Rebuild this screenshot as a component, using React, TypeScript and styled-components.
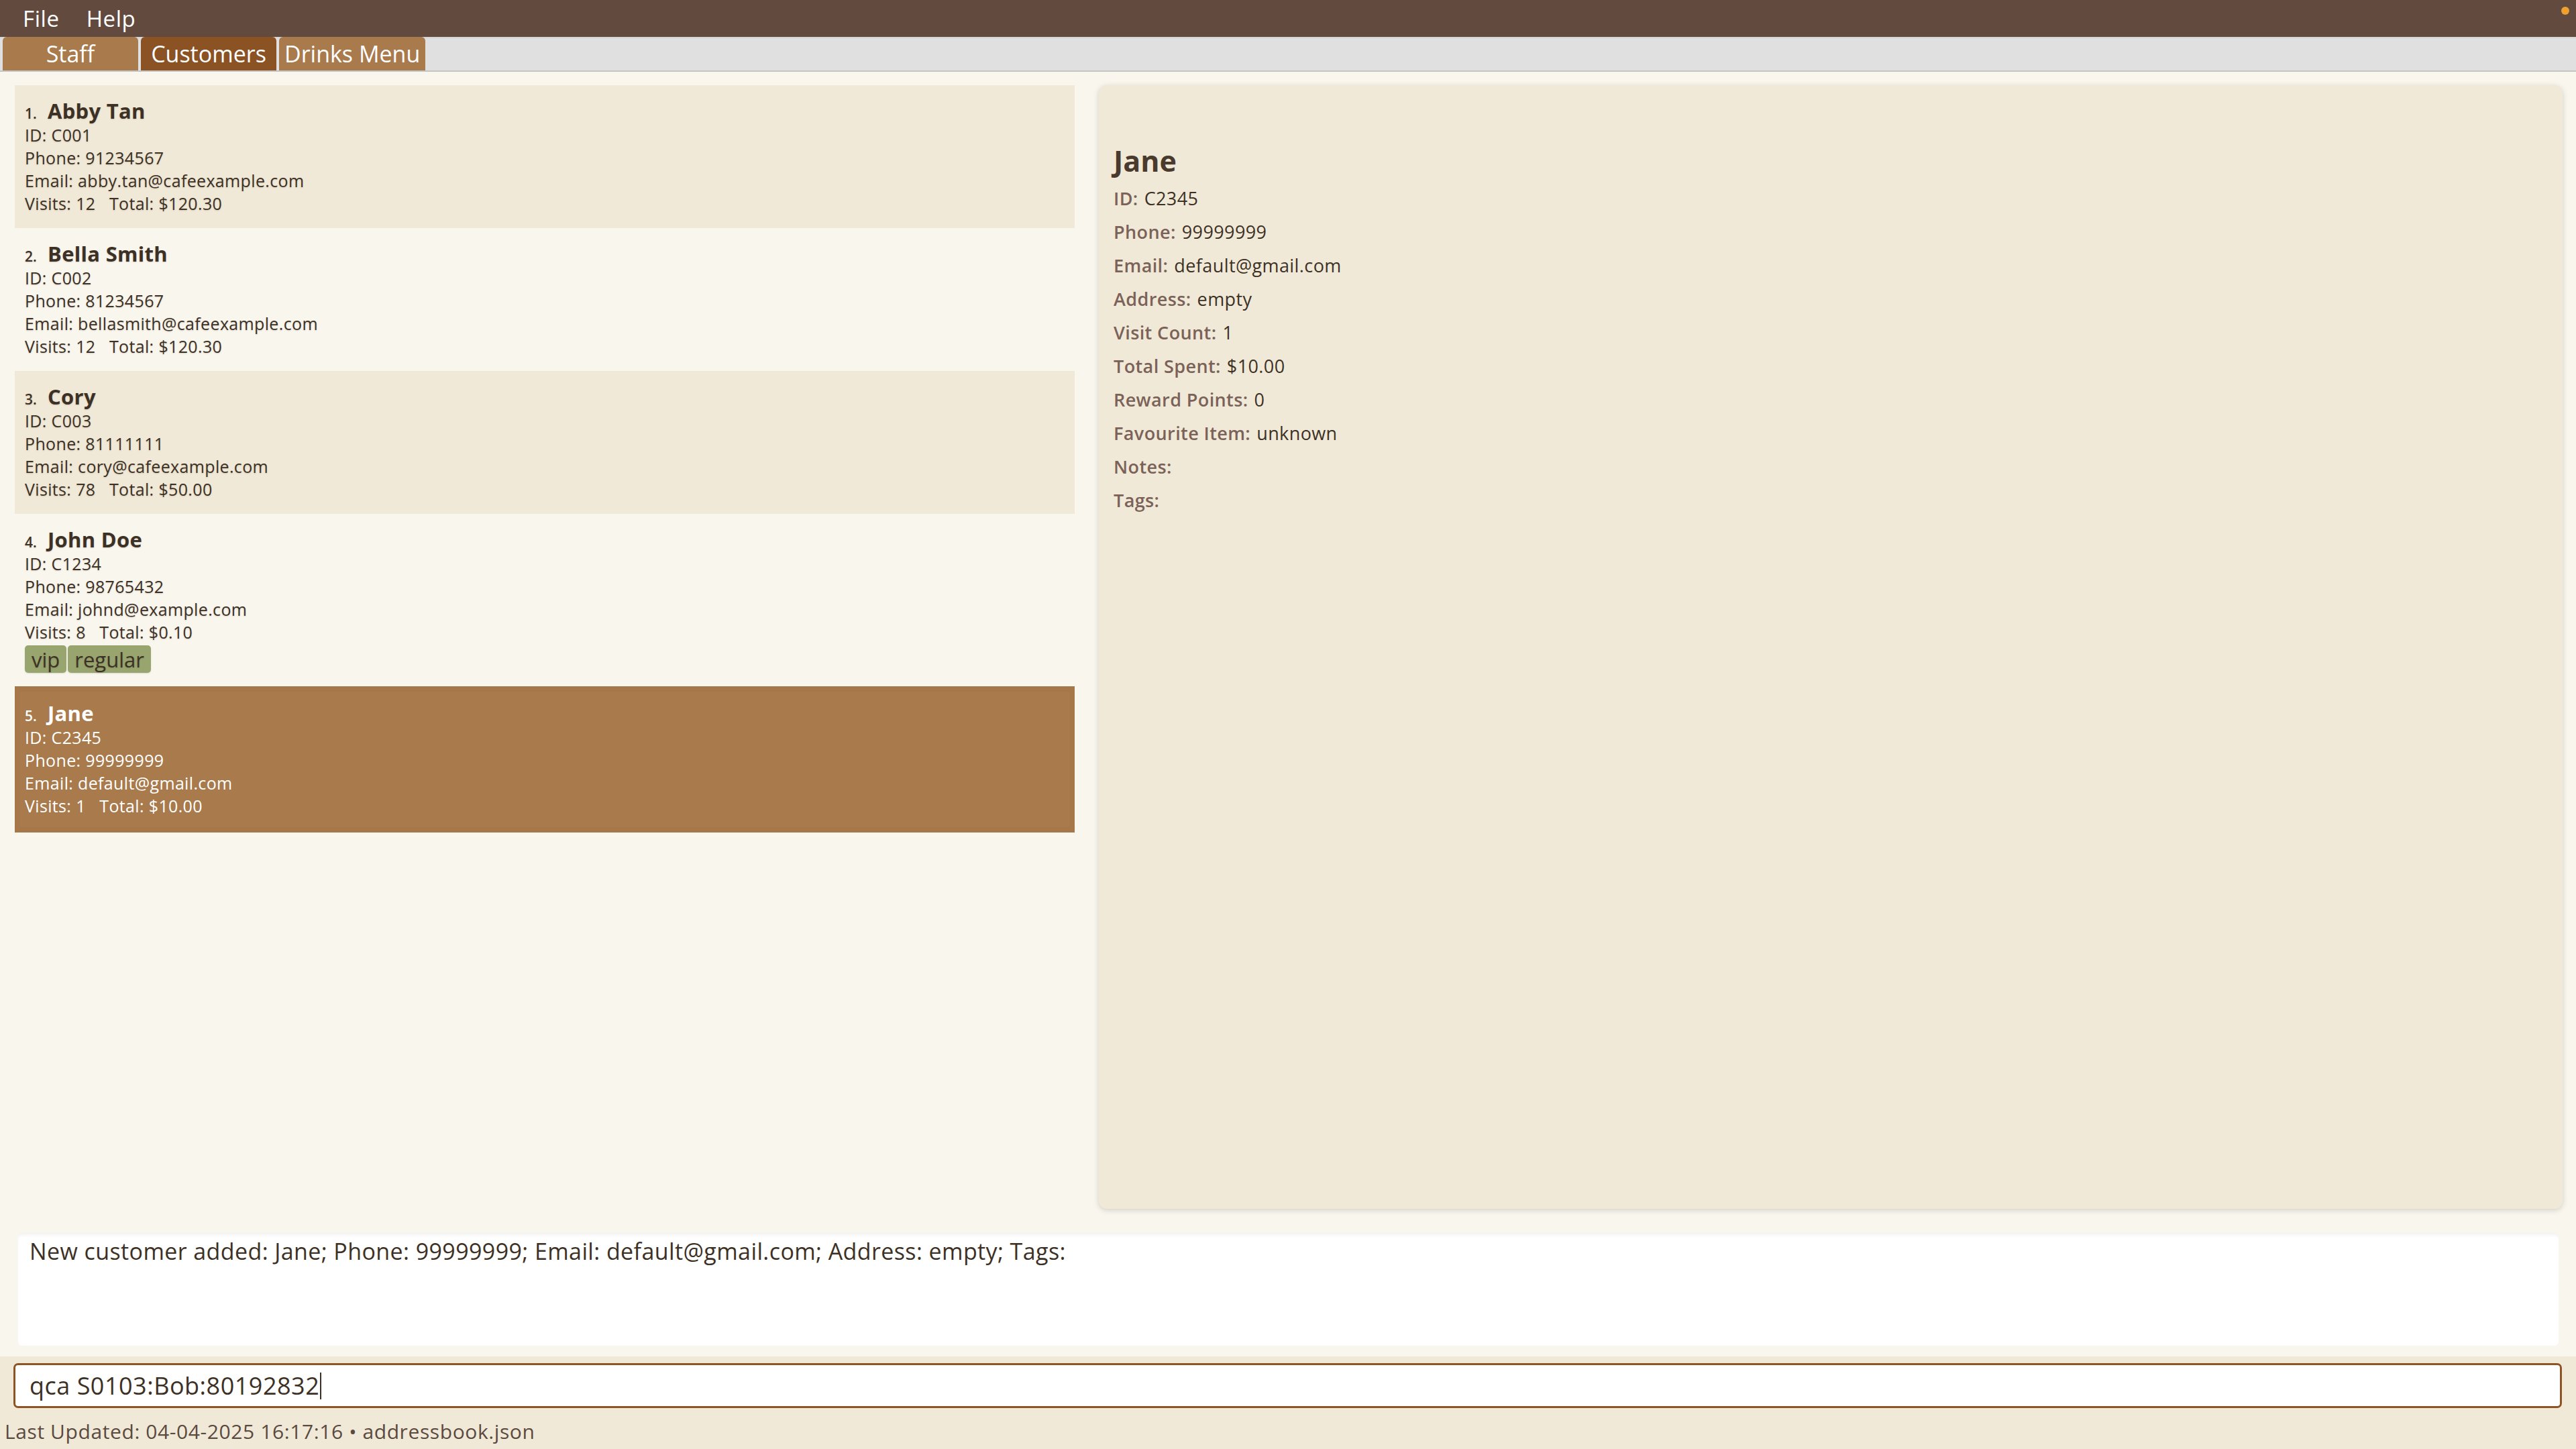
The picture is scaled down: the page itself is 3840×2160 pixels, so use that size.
import React from 'react'
import styled, { createGlobalStyle } from 'styled-components'

const GlobalStyle = createGlobalStyle`
  html, body {
    margin: 0;
    padding: 0;
    background: #f9f6ee;
  }
  * {
    box-sizing: border-box;
  }
`

const Window = styled.div`
  display: flex;
  flex-direction: column;
  width: 3840px;
  height: 2160px;
  overflow: hidden;
  background: #f9f6ee;
  font-family: 'Open Sans', 'Liberation Sans', sans-serif;
  color: #3d3126;
`

const MenuBar = styled.div`
  position: relative;
  display: flex;
  align-items: center;
  gap: 40px;
  height: 55px;
  padding-left: 34px;
  background: #634a3e;
  color: #ffffff;
  font-size: 33px;
  letter-spacing: 0.6px;
`

const StatusDot = styled.span`
  position: absolute;
  top: 10px;
  right: 10px;
  width: 12px;
  height: 12px;
  border-radius: 50%;
  background: #f0a030;
`

const TabBar = styled.div`
  display: flex;
  align-items: flex-end;
  gap: 4px;
  height: 52px;
  padding-left: 4px;
  background: #e0e0e0;
  border-bottom: 2px solid #c4c4c4;
  box-shadow: inset 0 3px 3px -2px rgba(0, 0, 0, 0.08);
`

const Tab = styled.div<{ $active?: boolean }>`
  display: flex;
  align-items: center;
  justify-content: center;
  min-width: 202px;
  height: 50px;
  padding: 0 8px;
  border-radius: 6px 6px 0 0;
  background: ${(p) => (p.$active ? '#8b5224' : '#a97a4c')};
  color: #ffffff;
  font-size: 34px;
`

const Main = styled.div`
  flex: 1;
  display: grid;
  grid-template-columns: 1580px 1fr;
  gap: 36px;
  min-height: 0;
  padding: 20px 20px 0 22px;
`

const List = styled.div`
  display: flex;
  flex-direction: column;
`

const Card = styled.div<{ $tone: 'plain' | 'alt' | 'selected' }>`
  display: flex;
  flex-direction: column;
  padding: ${(p) => (p.$tone === 'selected' ? '19px 15px 23px' : '17px 15px 20px')};
  background: ${(p) =>
    p.$tone === 'selected' ? '#a97a4c' : p.$tone === 'alt' ? '#f1e9d7' : 'transparent'};
  color: ${(p) => (p.$tone === 'selected' ? '#ffffff' : '#3d3126')};
  box-shadow: ${(p) =>
    p.$tone === 'selected' ? 'inset 0 0 0 8px rgba(150, 100, 55, 0.12)' : 'none'};
  text-shadow: ${(p) =>
    p.$tone === 'selected' ? 'none' : '0 1px 2px rgba(60, 40, 20, 0.18)'};
`

const NameRow = styled.div`
  display: flex;
  align-items: baseline;
  height: 40px;
`

const Index = styled.span`
  width: 34px;
  font-size: 21px;
  font-weight: 600;
`

const Name = styled.span`
  font-size: 31px;
  font-weight: 700;
  letter-spacing: 0.3px;
`

const Line = styled.div`
  height: 34px;
  line-height: 34px;
  font-size: 25px;
  letter-spacing: 0.35px;
  white-space: pre;
`

const Tags = styled.div`
  display: flex;
  gap: 2px;
  margin-top: 3px;
`

const Tag = styled.span`
  display: flex;
  align-items: center;
  height: 41px;
  padding: 0 10px;
  border-radius: 5px;
  background: #98a56e;
  color: #3d3126;
  font-size: 31px;
  box-shadow: 0 1px 2px rgba(0, 0, 0, 0.12);
`

const Detail = styled.div`
  display: flex;
  flex-direction: column;
  padding: 84px 22px 22px;
  border-radius: 12px;
  background: #f1e9d7;
  box-shadow: 0 2px 8px rgba(0, 0, 0, 0.16);
`

const DetailName = styled.div`
  height: 58px;
  line-height: 58px;
  margin-bottom: 2px;
  font-size: 43px;
  font-weight: 700;
  color: #4a3a2e;
`

const DetailRow = styled.div`
  height: 50px;
  line-height: 50px;
  font-size: 27px;
  letter-spacing: 0.4px;
  color: #3d3126;
`

const Label = styled.span`
  margin-right: 9px;
  font-weight: 600;
  color: #7b6259;
`

const ResultArea = styled.div`
  padding: 36px 26px 16px 27px;
`

const ResultBox = styled.div`
  height: 168px;
  padding: 4px 17px;
  border-radius: 6px;
  background: #ffffff;
  box-shadow: inset 0 6px 6px -4px rgba(0, 0, 0, 0.07);
  font-size: 34px;
  letter-spacing: 0.4px;
  color: #3d3126;
`

const CommandArea = styled.div`
  display: flex;
  flex-direction: column;
  height: 138px;
  padding: 10px 21px 0 20px;
  background: #f1e9d7;
`

const CommandBox = styled.div`
  display: flex;
  align-items: center;
  height: 67px;
  padding: 0 21px;
  border: 3px solid #8f5424;
  border-radius: 7px;
  background: #ffffff;
  font-size: 36px;
  letter-spacing: 0.5px;
  color: #3d3126;
`

const Caret = styled.span`
  display: inline-block;
  width: 2px;
  height: 40px;
  margin-left: 1px;
  background: #3d3126;
`

const StatusBar = styled.div`
  display: flex;
  align-items: center;
  flex: 1;
  padding-top: 8px;
  margin-left: -13px;
  font-size: 30px;
  letter-spacing: 0.6px;
  color: #5a4a3f;
`

type Customer = {
  name: string
  id: string
  phone: string
  email: string
  visits: string
  total: string
  tags?: string[]
}

const customers: Customer[] = [
  { name: 'Abby Tan', id: 'C001', phone: '91234567', email: 'abby.tan@cafeexample.com', visits: '12', total: '$120.30' },
  { name: 'Bella Smith', id: 'C002', phone: '81234567', email: 'bellasmith@cafeexample.com', visits: '12', total: '$120.30' },
  { name: 'Cory', id: 'C003', phone: '81111111', email: 'cory@cafeexample.com', visits: '78', total: '$50.00' },
  { name: 'John Doe', id: 'C1234', phone: '98765432', email: 'johnd@example.com', visits: '8', total: '$0.10', tags: ['vip', 'regular'] },
  { name: 'Jane', id: 'C2345', phone: '99999999', email: 'default@gmail.com', visits: '1', total: '$10.00' },
]

const details: [string, string][] = [
  ['ID:', 'C2345'],
  ['Phone:', '99999999'],
  ['Email:', 'default@gmail.com'],
  ['Address:', 'empty'],
  ['Visit Count:', '1'],
  ['Total Spent:', '$10.00'],
  ['Reward Points:', '0'],
  ['Favourite Item:', 'unknown'],
  ['Notes:', ''],
  ['Tags:', ''],
]

export default function App() {
  const selected = 4

  return (
    <Window>
      <GlobalStyle />
      <MenuBar>
        <span>File</span>
        <span>Help</span>
        <StatusDot />
      </MenuBar>

      <TabBar>
        <Tab>Staff</Tab>
        <Tab $active>Customers</Tab>
        <Tab>Drinks Menu</Tab>
      </TabBar>

      <Main>
        <List>
          {customers.map((c, i) => (
            <Card
              key={c.id}
              $tone={i === selected ? 'selected' : i % 2 === 0 ? 'alt' : 'plain'}
            >
              <NameRow>
                <Index>{i + 1}.</Index>
                <Name>{c.name}</Name>
              </NameRow>
              <Line>ID: {c.id}</Line>
              <Line>Phone: {c.phone}</Line>
              <Line>Email: {c.email}</Line>
              <Line>{`Visits: ${c.visits}   Total: ${c.total}`}</Line>
              {c.tags && (
                <Tags>
                  {c.tags.map((t) => (
                    <Tag key={t}>{t}</Tag>
                  ))}
                </Tags>
              )}
            </Card>
          ))}
        </List>

        <Detail>
          <DetailName>Jane</DetailName>
          {details.map(([label, value]) => (
            <DetailRow key={label}>
              <Label>{label}</Label>
              {value}
            </DetailRow>
          ))}
        </Detail>
      </Main>

      <ResultArea>
        <ResultBox>
          New customer added: Jane; Phone: 99999999; Email: default@gmail.com; Address: empty; Tags:
        </ResultBox>
      </ResultArea>

      <CommandArea>
        <CommandBox>
          qca S0103:Bob:80192832
          <Caret />
        </CommandBox>
        <StatusBar>Last Updated: 04-04-2025 16:17:16 • addressbook.json</StatusBar>
      </CommandArea>
    </Window>
  )
}
